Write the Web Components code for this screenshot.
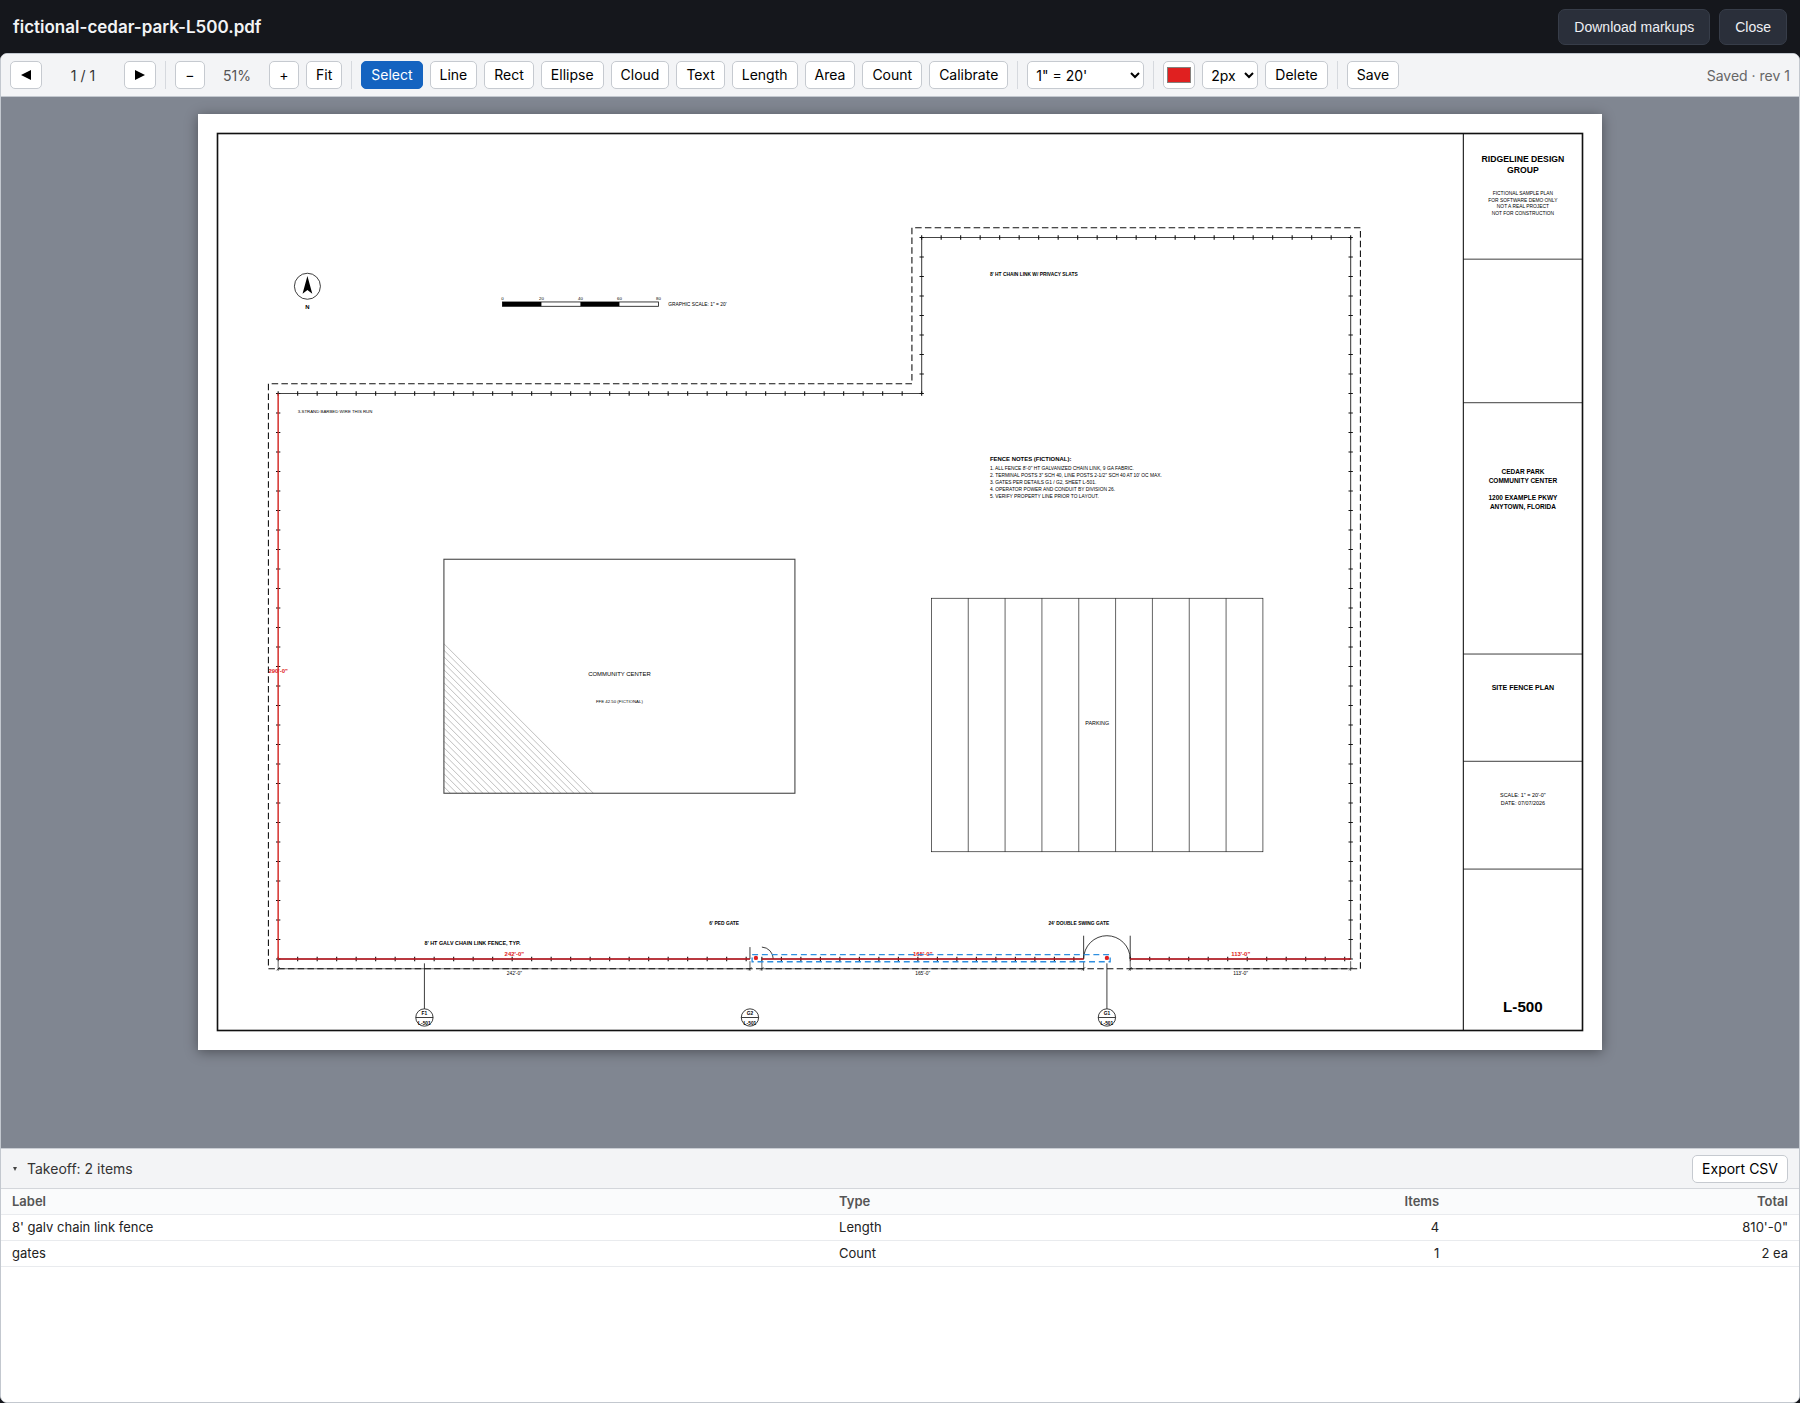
<!DOCTYPE html>
<html lang="en">
<head>
<meta charset="utf-8">
<title>fictional-cedar-park-L500.pdf</title>
<style>
  html, body { margin: 0; height: 100%; background: #15171c; }
  body { font-family: Inter, "Liberation Sans", sans-serif; font-size: 14px; color: #222; }
</style>
</head>
<body>
<markup-viewer></markup-viewer>

<template id="viewer">
  <style>
    :host { display: flex; flex-direction: column; height: 100vh; background: #15171c; }
    .app { flex: 1; min-height: 0; display: flex; flex-direction: column; background: #fff;
           border: 1px solid #c3c8cf; border-radius: 7px; overflow: hidden; }
  </style>
  <file-header>fictional-cedar-park-L500.pdf</file-header>
  <main class="app">
    <tool-bar></tool-bar>
    <sheet-canvas></sheet-canvas>
    <takeoff-panel></takeoff-panel>
  </main>
</template>

<template id="file-header">
  <style>
    :host { display: flex; align-items: center; gap: 9px; height: 53px; padding: 0 13px; box-sizing: border-box; color: #f2f3f5; }
    h1 { margin: 0; flex: 1; font-size: 17px; font-weight: 600; }
    button { font: 14px "Liberation Sans", Arial, sans-serif; color: #eef0f4; background: #2a2f3a; border: 1px solid #373d49;
             border-radius: 7px; height: 36px; padding: 0 15px; }
  </style>
  <h1><slot></slot></h1>
  <button type="button">Download markups</button>
  <button type="button">Close</button>
</template>

<template id="tool-button">
  <style>
    :host { display: block; }
    button { display: block; height: 28px; box-sizing: border-box; padding: 0 9px; min-width: 30px; font: 14px/24px Inter, sans-serif;
             color: #000; background: #fff; border: 1px solid #c6cad0; border-radius: 5px; white-space: nowrap; }
    :host([active]) button { background: #1463c0; border-color: #1463c0; color: #fff; }
    ::slotted(svg) { display: block; }
  </style>
  <button type="button"><slot></slot></button>
</template>

<template id="tool-bar">
  <style>
    :host { display: flex; align-items: center; gap: 7px; height: 42px; padding: 0 9px; background: #f3f4f6;
            border-bottom: 1px solid #c3c8cf; flex: none; }
    .sep { width: 1px; height: 28px; margin: 0 2px; background: #d6d9de; }
    .page, .zoom { text-align: center; }
    .page { width: 68px; color: #333; }
    .zoom { width: 50px; color: #555; }
    select, input { height: 28px; box-sizing: border-box; border: 1px solid #c6cad0; border-radius: 5px; background: #fff; margin: 0; }
    select { font: 14px Inter, sans-serif; color: #000; padding: 0 4px; }
    .scale { width: 117px; }
    .weight { width: 56px; }
    input { width: 32px; padding: 0 3px; }
    input::-webkit-color-swatch-wrapper { padding: 5px 0; }
    input::-webkit-color-swatch { border: 1px solid #85807c; border-radius: 0; }
    .status { margin-left: auto; color: #666; }
  </style>
  <tool-button><svg width="12" height="10" viewBox="0 0 12 10" role="img" aria-label="Previous page"><path d="M11 0v10L1 5z"/></svg></tool-button>
  <span class="page">1 / 1</span>
  <tool-button><svg width="12" height="10" viewBox="0 0 12 10" role="img" aria-label="Next page"><path d="M1 0v10l10-5z"/></svg></tool-button>
  <span class="sep"></span>
  <tool-button>−</tool-button>
  <span class="zoom">51%</span>
  <tool-button>+</tool-button>
  <tool-button>Fit</tool-button>
  <span class="sep"></span>
  <tool-button active>Select</tool-button>
  <tool-button>Line</tool-button>
  <tool-button>Rect</tool-button>
  <tool-button>Ellipse</tool-button>
  <tool-button>Cloud</tool-button>
  <tool-button>Text</tool-button>
  <tool-button>Length</tool-button>
  <tool-button>Area</tool-button>
  <tool-button>Count</tool-button>
  <tool-button>Calibrate</tool-button>
  <span class="sep"></span>
  <select class="scale" aria-label="Scale"><option>1" = 20'</option></select>
  <span class="sep"></span>
  <input type="color" value="#e02020" aria-label="Colour">
  <select class="weight" aria-label="Line width"><option>2px</option></select>
  <tool-button>Delete</tool-button>
  <span class="sep"></span>
  <tool-button>Save</tool-button>
  <span class="status">Saved · rev 1</span>
</template>

<template id="sheet-canvas">
  <style>
    :host { flex: 1; min-height: 0; display: flex; justify-content: center; align-items: flex-start; padding: 17px 16px; background: #808691; overflow: hidden; }
    svg { display: block; width: 100%; max-width: 1404px; aspect-ratio: 3 / 2; background: #fff; box-shadow: 0 2px 12px rgba(0,0,0,.4); }
    text { font-family: "Liberation Sans", Arial, sans-serif; fill: #000; }
    .b { font-weight: 700; }
    .m { text-anchor: middle; }
    .s8 { font-size: 8px; } .s9 { font-size: 9px; } .s10 { font-size: 10px; } .s11 { font-size: 11px; }
    .s12 { font-size: 12px; } .s13 { font-size: 13px; } .s16 { font-size: 16px; } .s28 { font-size: 28px; }
    text.red, .red { fill: #e02020; }
    .line { fill: none; stroke: #111; }
  </style>
  <svg viewBox="0 0 2592 1728" role="img" aria-label="Site fence plan, sheet L-500">
    <rect class="line" x="36" y="36" width="2520" height="1656" stroke-width="3"/>
    <path class="line" stroke-width="2" d="M2336 36V1692"/>
    <path class="line" stroke-width="1.5" d="M2336 268H2556M2336 533H2556M2336 997H2556M2336 1195H2556M2336 1394H2556"/>
    <g class="b m">
      <text class="s16" x="2446" y="89">RIDGELINE DESIGN</text>
      <text class="s16" x="2446" y="109">GROUP</text>
      <text class="s12" x="2446" y="665">CEDAR PARK</text>
      <text class="s12" x="2446" y="681">COMMUNITY CENTER</text>
      <text class="s12" x="2446" y="713">1200 EXAMPLE PKWY</text>
      <text class="s12" x="2446" y="729">ANYTOWN, FLORIDA</text>
      <text class="s13" x="2446" y="1063">SITE FENCE PLAN</text>
      <text class="s28" x="2446" y="1657">L-500</text>
    </g>
    <g class="m">
      <text class="s9" x="2446" y="150">FICTIONAL SAMPLE PLAN</text>
      <text class="s9" x="2446" y="162">FOR SOFTWARE DEMO ONLY</text>
      <text class="s9" x="2446" y="174">NOT A REAL PROJECT</text>
      <text class="s9" x="2446" y="186">NOT FOR CONSTRUCTION</text>
      <text class="s10" x="2446" y="1260">SCALE: 1" = 20'-0"</text>
      <text class="s10" x="2446" y="1275">DATE: 07/07/2026</text>
    </g>

    <path class="line" stroke-width="2" stroke-dasharray="12 6" d="M130 1578H2146V210H1318V498H130Z"/>
    <path class="line" stroke-width="2" style="stroke:#444" d="M148 516H1336V228H2128V1560"/>
    <path class="line" stroke-width="2" d="M148 1560H1019M1041 1560H1635M1721 1560H2128"/>
    <path class="line" id="ticks" stroke-width="2"/>

    <circle class="line" cx="202" cy="318" r="24" stroke-width="1.5"/>
    <path d="M202 299L211 332L202 325L193 332Z"/>
    <text class="s11 b m" x="202" y="360">N</text>

    <rect class="line" x="562" y="347" width="288" height="8" stroke-width="1.5"/>
    <path d="M562 347h72v8h-72zM706 347h72v8h-72z"/>
    <g class="s8 m">
      <text x="562" y="343">0</text><text x="634" y="343">20</text><text x="706" y="343">40</text>
      <text x="778" y="343">60</text><text x="850" y="343">80</text>
    </g>
    <text class="s9" x="868" y="354">GRAPHIC SCALE: 1" = 20'</text>
    <text class="s8" x="184" y="552">3-STRAND BARBED WIRE THIS RUN</text>
    <text class="s9 b" x="1462" y="299">8' HT CHAIN LINK W/ PRIVACY SLATS</text>

    <text class="s11 b" x="1462" y="641">FENCE NOTES (FICTIONAL):</text>
    <g class="s9">
      <text x="1462" y="657">1. ALL FENCE 8'-0" HT GALVANIZED CHAIN LINK, 9 GA FABRIC.</text>
      <text x="1462" y="670">2. TERMINAL POSTS 3" SCH 40, LINE POSTS 2-1/2" SCH 40 AT 10' OC MAX.</text>
      <text x="1462" y="683">3. GATES PER DETAILS G1 / G2, SHEET L-501.</text>
      <text x="1462" y="696">4. OPERATOR POWER AND CONDUIT BY DIVISION 26.</text>
      <text x="1462" y="709">5. VERIFY PROPERTY LINE PRIOR TO LAYOUT.</text>
    </g>

    <path id="hatch" fill="none" stroke="#888" stroke-width="1"/>
    <rect class="line" x="454" y="822" width="648" height="432" stroke-width="2" style="stroke:#444"/>
    <text class="s11 m" x="778" y="1038">COMMUNITY CENTER</text>
    <text class="s8 m" x="778" y="1088">FFE 42.50 (FICTIONAL)</text>

    <rect class="line" x="1354" y="894" width="612" height="468" stroke-width="1.2"/>
    <path class="line" id="stalls" stroke-width="1.2"/>
    <text class="s10 m" x="1660" y="1128">PARKING</text>

    <text class="s10 b" x="418" y="1535">8' HT GALV CHAIN LINK FENCE, TYP.</text>
    <text class="s9 b" x="944" y="1498">6' PED GATE</text>
    <text class="s9 b" x="1570" y="1498">24' DOUBLE SWING GATE</text>

    <path class="line" stroke-width="1.5" d="M1019 1560V1538M1041 1538A22 22 0 0 1 1062 1560M1635 1560V1517M1721 1560V1517M1635 1560A43 43 0 0 1 1721 1560"/>
    <path class="line" stroke-width="1.2" d="M148 1578H1019M1041 1578H1635M1721 1578H2128"/>
    <path class="line" id="dims" stroke-width="1.2"/>
    <g class="s9 m">
      <text x="584" y="1590">242'-0"</text>
      <text x="1338" y="1590">165'-0"</text>
      <text x="1925" y="1590">113'-0"</text>
    </g>
    <path class="line" stroke-width="1.5" d="M418 1568V1652M1678 1568V1652"/>
    <g id="callouts"></g>

    <path fill="none" stroke="#d42a26" stroke-width="3" opacity=".9" d="M148 1560V516"/>
    <path fill="none" stroke="#d01822" stroke-width="4" opacity=".7" d="M148 1560H1019M1041 1560H1635M1721 1560H2128"/>
    <g class="s11 b m">
      <text class="red" x="148" y="1032">290'-0"</text>
      <text class="red" x="584" y="1554">242'-0"</text>
      <text class="red" x="1338" y="1554">165'-0"</text>
      <text class="red" x="1925" y="1554">113'-0"</text>
    </g>
    <circle class="red" cx="1030" cy="1558" r="4"/>
    <circle class="red" cx="1678" cy="1558" r="4"/>
    <rect x="1023" y="1552" width="661" height="13" fill="none" stroke="#2f8fe0" stroke-width="2.5" stroke-dasharray="11 7"/>
  </svg>
</template>

<template id="takeoff-panel">
  <style>
    :host { display: flex; flex-direction: column; flex: 0 0 254px; box-sizing: border-box; background: #fff; border-top: 1px solid #c9cdd3; }
    header { display: flex; justify-content: space-between; align-items: center; height: 39px; padding: 0 11px; background: #f3f4f6; border-bottom: 1px solid #d3d6db; }
    .toggle { display: flex; align-items: center; gap: 9px; border: 0; padding: 0; background: none; font: 14px Inter, sans-serif; color: #333; }
    .toggle svg { display: block; }
    table { width: 100%; border-collapse: collapse; table-layout: fixed; font-size: 13px; line-height: 17px; color: #222; }
    th, td { padding: 4px 11px; text-align: left; border-bottom: 1px solid #e9ebee; }
    th { font-weight: 600; color: #555; background: #fafbfc; }
    .n { text-align: right; }
    .c1 { width: 46%; } .c2 { width: 20%; } .c3 { width: 14.6%; }
  </style>
  <header>
    <button class="toggle" type="button" aria-expanded="true"><svg width="6" height="5" viewBox="0 0 6 5"><path d="M1 1h4L3 5z" fill="#444"/></svg>Takeoff: 2 items</button>
    <tool-button>Export CSV</tool-button>
  </header>
  <table>
    <colgroup><col class="c1"><col class="c2"><col class="c3"><col></colgroup>
    <thead><tr><th>Label</th><th>Type</th><th class="n">Items</th><th class="n">Total</th></tr></thead>
    <tbody>
      <tr><td>8' galv chain link fence</td><td>Length</td><td class="n">4</td><td class="n">810'-0"</td></tr>
      <tr><td>gates</td><td>Count</td><td class="n">1</td><td class="n">2 ea</td></tr>
    </tbody>
  </table>
</template>

<script>
  class TemplateElement extends HTMLElement {
    constructor() {
      super();
      const id = this.constructor.template;
      this.attachShadow({ mode: 'open' }).append(document.getElementById(id).content.cloneNode(true));
    }
  }
  class ToolButton extends TemplateElement { static template = 'tool-button'; }
  class FileHeader extends TemplateElement { static template = 'file-header'; }
  class ToolBar extends TemplateElement { static template = 'tool-bar'; }
  class TakeoffPanel extends TemplateElement { static template = 'takeoff-panel'; }
  class MarkupViewer extends TemplateElement { static template = 'viewer'; }

  // The sheet is drawn in points, 36 x 24 in; 3.6 points are one foot at 1" = 20'.
  class SheetCanvas extends TemplateElement {
    static template = 'sheet-canvas';
    connectedCallback() {
      const $ = id => this.shadowRoot.getElementById(id);
      const post = 36, half = 4;
      let ticks = '';
      const runX = (x1, x2, y) => { for (let x = x1; x <= x2; x += post) ticks += `M${x} ${y - half}v${2 * half}`; };
      const runY = (y1, y2, x) => { for (let y = y1; y <= y2; y += post) ticks += `M${x - half} ${y}h${2 * half}`; };
      runX(148, 1019, 1560); runX(1041, 1635, 1560); runX(1721, 2128, 1560);
      runX(148, 1336, 516); runX(1336, 2128, 228);
      runY(516, 1560, 148); runY(228, 516, 1336); runY(228, 1560, 2128);
      $('ticks').setAttribute('d', ticks);

      let hatch = '';
      for (let d = 12; d <= 276; d += 12) hatch += `M454 ${1254 - d}l${d} ${d}`;
      $('hatch').setAttribute('d', hatch);

      let stalls = '';
      for (let x = 1422; x < 1966; x += 68) stalls += `M${x} 894V1362`;
      $('stalls').setAttribute('d', stalls);

      $('dims').setAttribute('d', [148, 1019, 1041, 1635, 1721, 2128]
        .map(x => `M${x} 1564V1582M${x - 3} 1581l6 -6`).join(''));

      $('callouts').innerHTML = [[418, 'F1'], [1019, 'G2'], [1678, 'G1']].map(([x, name]) =>
        `<circle class="line" cx="${x}" cy="1668" r="16" stroke-width="1.5"/>
         <path class="line" stroke-width="1.5" d="M${x - 16} 1668h32"/>
         <text class="s9 b m" x="${x}" y="1664">${name}</text>
         <text class="s9 b m" x="${x}" y="1681">L-501</text>`).join('');
    }
  }
  customElements.define('tool-button', ToolButton);
  customElements.define('file-header', FileHeader);
  customElements.define('tool-bar', ToolBar);
  customElements.define('sheet-canvas', SheetCanvas);
  customElements.define('takeoff-panel', TakeoffPanel);
  customElements.define('markup-viewer', MarkupViewer);
</script>
</body>
</html>
